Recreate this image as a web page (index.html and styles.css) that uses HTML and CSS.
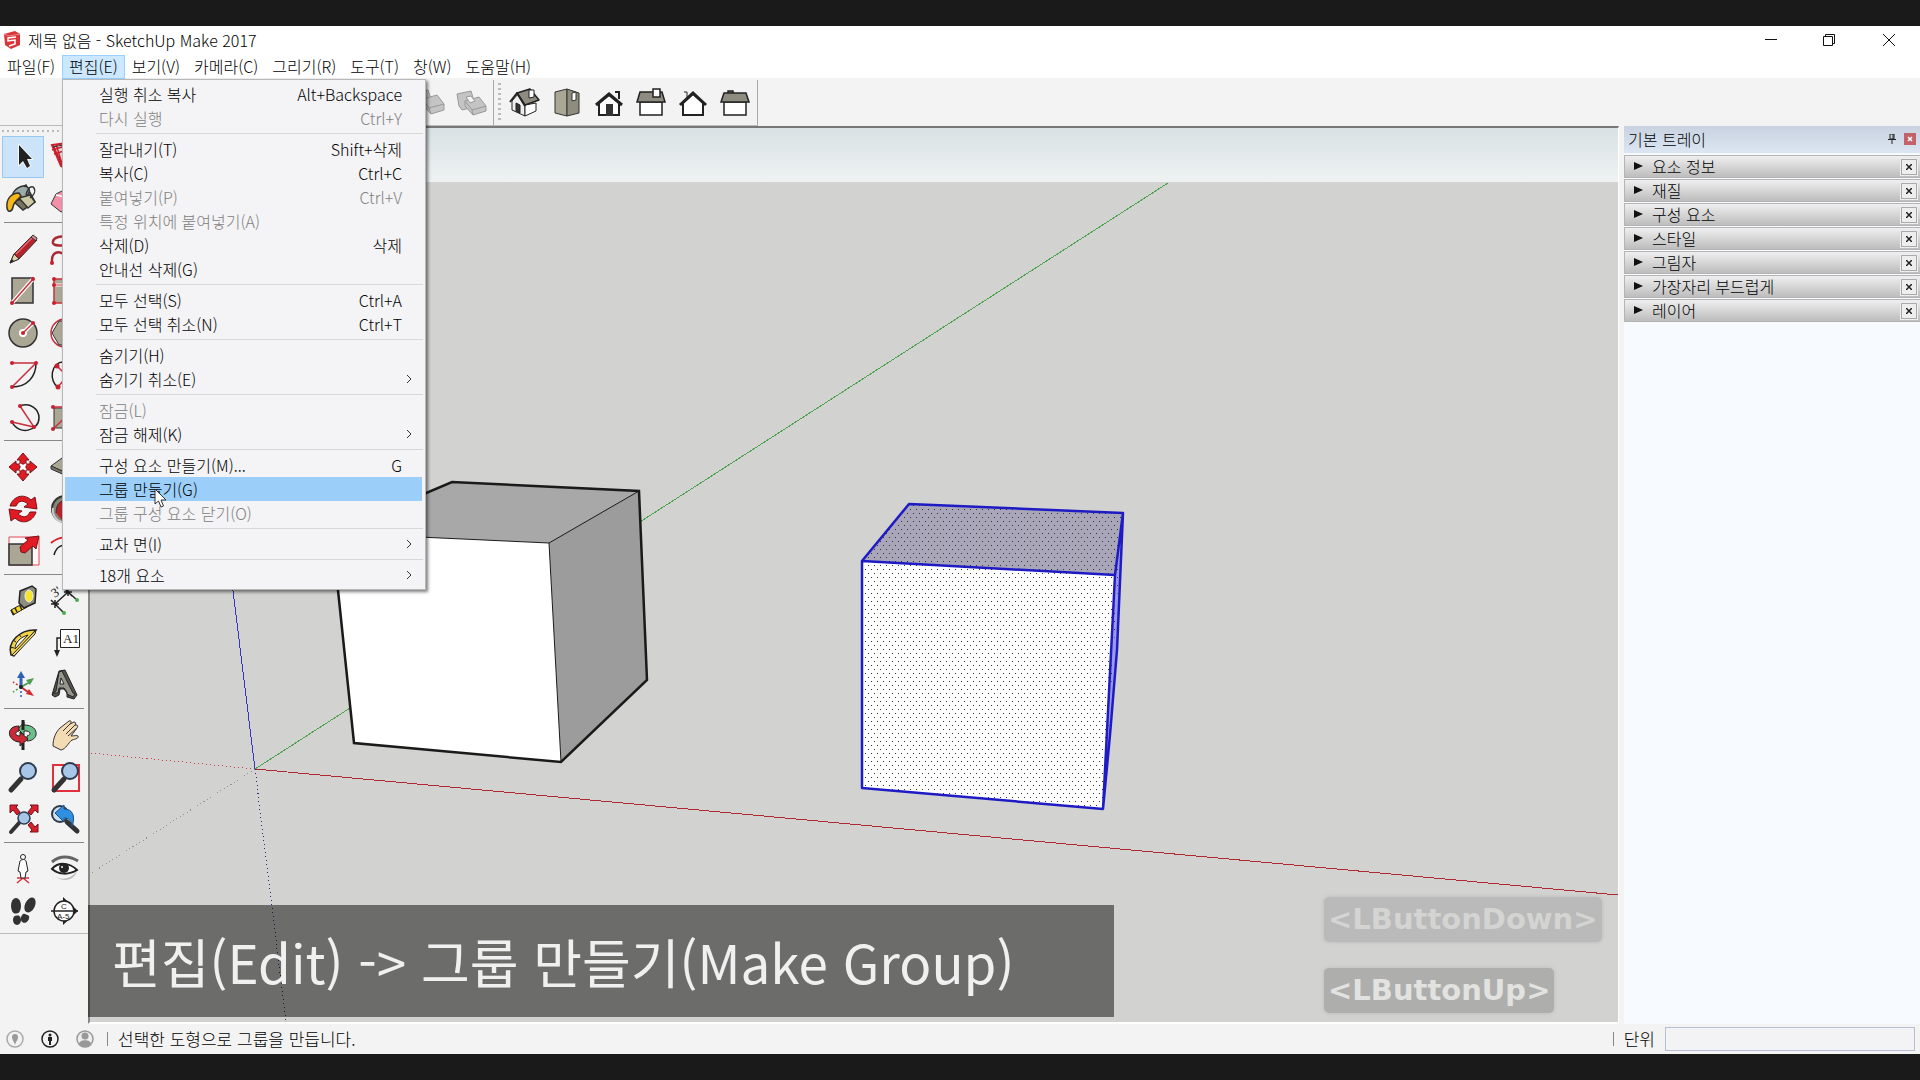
FILE: index.html
```html
<!DOCTYPE html>
<html lang="ko">
<head>
  <meta charset="UTF-8">
  <title>제목 없음 - SketchUp Make 2017</title>
  <meta name="viewport" content="width=device-width, initial-scale=1">
  <link rel="stylesheet" href="styles.css">
</head>
<body>
  <div class="window">
    <header class="titlebar">
      <svg class="logo" viewBox="0 0 18 20">
        <path d="M1 4L12 1l5 3v11l-9 4-6-4z" fill="#d8343a"/>
        <path d="M1 4l5 2 11-2" fill="none" stroke="#f08a8c"/>
        <path d="M13 7L5 8v3l7-1v4l-6 2" fill="none" stroke="#fff" stroke-width="1.500"/>
      </svg>
      <h1>제목 없음 - SketchUp Make 2017</h1>
      <div class="window-buttons">
        <button aria-label="최소화"><svg viewBox="0 0 14 14"><path d="M1 6.500h12"/></svg></button>
        <button aria-label="이전 크기로"><svg viewBox="0 0 14 14"><path d="M1.500 3.500h9v9h-9zM3.500 3V1.500h9v9H11"/></svg></button>
        <button aria-label="닫기"><svg viewBox="0 0 14 14"><path d="M1 1l12 12M13 1L1 13"/></svg></button>
      </div>
    </header>

    <nav class="menubar">
      <button>파일(F)</button>
      <div class="menu-open">
        <button class="active">편집(E)</button>
        <div class="dropdown">
          <button>실행 취소 복사<kbd>Alt+Backspace</kbd></button>
          <button disabled>다시 실행<kbd>Ctrl+Y</kbd></button>
          <hr>
          <button>잘라내기(T)<kbd>Shift+삭제</kbd></button>
          <button>복사(C)<kbd>Ctrl+C</kbd></button>
          <button disabled>붙여넣기(P)<kbd>Ctrl+V</kbd></button>
          <button disabled>특정 위치에 붙여넣기(A)</button>
          <button>삭제(D)<kbd>삭제</kbd></button>
          <button>안내선 삭제(G)</button>
          <hr>
          <button>모두 선택(S)<kbd>Ctrl+A</kbd></button>
          <button>모두 선택 취소(N)<kbd>Ctrl+T</kbd></button>
          <hr>
          <button>숨기기(H)</button>
          <button class="sub">숨기기 취소(E)<svg viewBox="0 0 6 10"><path d="M1 1l4 4-4 4"/></svg></button>
          <hr>
          <button disabled>잠금(L)</button>
          <button class="sub">잠금 해제(K)<svg viewBox="0 0 6 10"><path d="M1 1l4 4-4 4"/></svg></button>
          <hr>
          <button>구성 요소 만들기(M)...<kbd>G</kbd></button>
          <button class="hover">그룹 만들기(G)</button>
          <button disabled>그룹 구성 요소 닫기(O)</button>
          <hr>
          <button class="sub">교차 면(I)<svg viewBox="0 0 6 10"><path d="M1 1l4 4-4 4"/></svg></button>
          <hr>
          <button class="sub">18개 요소<svg viewBox="0 0 6 10"><path d="M1 1l4 4-4 4"/></svg></button>
          <svg class="pointer" viewBox="0 0 13 20"><path d="M1 1v15l3.500-3 2.500 6 2.500-1-2.500-6h5z" fill="#fff" stroke="#333"/></svg>
        </div>
      </div>
      <button>보기(V)</button>
      <button>카메라(C)</button>
      <button>그리기(R)</button>
      <button>도구(T)</button>
      <button>창(W)</button>
      <button>도움말(H)</button>
    </nav>

    <div class="toolbar">
      <div class="group solids">
        <button disabled aria-label="분할"><svg viewBox="0 0 42 42"><g fill="#c4c4c4" stroke="#999"><path d="M7 11l12-3 3 9-12 3z"/><path d="M14 17l14-4 7 9v6l-13 4-7-8z"/><path d="M14 18l6 8 15-4M20 26l2 6" fill="none"/></g></svg></button>
        <button disabled aria-label="쉘"><svg viewBox="0 0 42 42"><g fill="#c4c4c4" stroke="#999" stroke-linejoin="round"><path d="M6 12l14-3 3 10v6l-12 3-3-4z"/><path d="M14 19l14-4 7 9v5l-13 4-8-9z"/><path d="M14 19l7 9 14-4M21 28l1 5" fill="none"/><path d="M15 15l5-1 4 5-5 2z" fill="#f3f3f3"/></g></svg></button>
      </div>
      <div class="group views">
        <span class="grip"></span>
        <button aria-label="등각"><svg viewBox="0 0 42 42"><g stroke="#222" stroke-linejoin="round"><path d="M8 19l6-7 7 11v11l-13-6z" fill="#eee"/><path d="M21 23l11-2v8l-11 5z" fill="#fff"/><path d="M13 11l13-4 9 11-14 5z" fill="#8e8c80" stroke-width="1.500"/><path d="M6 20l7-9 8 13" fill="none" stroke-width="2"/><path d="M12 21l4 2v8l-4-2z" fill="#333"/><path d="M25 8h5v7l-5 1z" fill="#fff"/></g></svg></button>
        <button aria-label="맨 위"><svg viewBox="0 0 42 42"><g stroke="#333" stroke-linejoin="round"><path d="M9 10l12-3v27l-12-3z" fill="#aaa794"/><path d="M21 7l12 4v20l-12 3z" fill="#8f8d7e"/><path d="M26 11l4-1v8l-4 1z" fill="#fff"/></g></svg></button>
        <button aria-label="앞"><svg viewBox="0 0 42 42"><path d="M11 21v12h20V21l-10-8z" fill="#fff" stroke="#222" stroke-width="2"/><path d="M8 23l13-11 13 11" fill="none" stroke="#222" stroke-width="3"/><path d="M18 22h7v12h-7z" fill="#333"/><path d="M27 10h4v7" fill="none" stroke="#222" stroke-width="2"/></svg></button>
        <button aria-label="오른쪽"><svg viewBox="0 0 42 42"><g stroke="#222" stroke-width="1.500"><path d="M10 20h22v13H10z" fill="#fff"/><path d="M10 10h22l3 10H7z" fill="#8e8c80"/><path d="M23 7h7v8h-7z" fill="#fff"/></g></svg></button>
        <button aria-label="뒤"><svg viewBox="0 0 42 42"><path d="M12 10h3v7" fill="none" stroke="#222"/><path d="M11 21v12h20V21l-10-9z" fill="#fff" stroke="#222" stroke-width="2"/><path d="M8 23l13-12 13 12" fill="none" stroke="#222" stroke-width="3"/></svg></button>
        <button aria-label="왼쪽"><svg viewBox="0 0 42 42"><g stroke="#222" stroke-width="1.500"><path d="M14 9h5v3h-5z" fill="#888"/><path d="M10 20h22v13H10z" fill="#fff"/><path d="M10 11h22l3 9H7z" fill="#8e8c80"/></g></svg></button>
      </div>
    </div>

    <main class="workspace">
      <aside class="tools">
        <span class="grip-row"></span>
        <div class="tool-grid">
          <button class="selected" aria-label="선택"><svg viewBox="0 0 42 42"><path d="M17 9v20l4-4 4 7 3-2-3-7h5z" fill="#222" stroke="#fff" stroke-width="1.500" paint-order="stroke"/></svg></button>
          <button aria-label="구성 요소 만들기"><svg viewBox="0 0 42 42"><path d="M8 9l23-3-6 28-8-4z" fill="#e9d5d5" stroke="#c8202f" stroke-width="2"/><path d="M9 9l9 20M12 8l6 20M8 14l20-6M10 18l20-6" stroke="#c8202f" stroke-width="1.500"/><path d="M9 11l10-2" stroke="#333"/></svg></button>
          <button aria-label="페인트통"><svg viewBox="0 0 42 42"><g stroke="#333" stroke-width="1.500"><path d="M13 13l11-6 9 17-12 8-10-9z" fill="#77735f"/><ellipse cx="19" cy="15" rx="9" ry="6" transform="rotate(-30 19 15)" fill="#9cacaa"/><path d="M17 20l9 10 7-6-5-7z" fill="#cfc8a4"/><path d="M24 17c2-8 6-10 8-7s0 7-4 10" fill="none"/><path d="M17 15c-8 0-13 6-12 15 1 5 5 4 6-1 1-6 5-7 8-11z" fill="#f7b719"/></g></svg></button>
          <button aria-label="지우개"><svg viewBox="0 0 42 42"><path d="M7 26l5-10 10-5 12 3v13L17 34z" fill="#f48fa8" stroke="#333"/><path d="M12 17l17 4" stroke="#fff" stroke-width="1.500"/></svg></button>
        </div>
        <hr>
        <div class="tool-grid">
          <button aria-label="선"><svg viewBox="0 0 42 42"><path d="M8 35l4-9L30 8l5 4-18 19z" fill="#b5232d" stroke="#333"/><path d="M14 26L31 9" stroke="#e96a70" stroke-width="1.500"/><path d="M8 35l4-9 5 5z" fill="#e5d4a8" stroke="#333"/><path d="M8 35l2-4 2 2z" fill="#222"/><path d="M29 9l2-2 4 3-1 3z" fill="#dc8b90" stroke="#333"/></svg></button>
          <button aria-label="프리핸드"><svg viewBox="0 0 42 42"><path d="M28 9c-10-2-20 0-19 6 1 5 19 0 22 6M8 35c-1-12 7-13 14-7s12 3 12-3" fill="none" stroke="#a82a35" stroke-width="2.500"/><circle cx="8" cy="35" r="2" fill="#c8202f"/></svg></button>
          <button aria-label="직사각형"><svg viewBox="0 0 42 42"><path d="M10 8h21v25H10z" fill="#aaa794" stroke="#333" stroke-width="1.500"/><path d="M10 33L31 9" stroke="#fff" stroke-width="4"/><path d="M10 33L31 9" stroke="#c8303f" stroke-width="1.500"/><g fill="#c8202f"><circle cx="10" cy="33" r="2"/><circle cx="31" cy="9" r="2"/></g></svg></button>
          <button aria-label="회전된 직사각형"><svg viewBox="0 0 42 42"><path d="M10 9h22v24H10z" fill="#aaa794" stroke="#c8303f" stroke-width="1.500"/><path d="M10 15h22" stroke="#fff" stroke-width="3"/><path d="M10 15h22" stroke="#c8303f"/><g fill="#c8202f"><circle cx="10" cy="9" r="2"/><circle cx="10" cy="15" r="2"/><circle cx="10" cy="33" r="2"/></g></svg></button>
          <button aria-label="원"><svg viewBox="0 0 42 42"><circle cx="21" cy="21" r="14" fill="#aaa794" stroke="#333" stroke-width="1.500"/><path d="M21 21l10-10" stroke="#fff" stroke-width="4"/><circle cx="21" cy="21" r="4" fill="#fff"/><path d="M21 21l10-10" stroke="#c8303f" stroke-width="1.500"/><g fill="#c8202f"><circle cx="21" cy="21" r="2"/><circle cx="31" cy="11" r="2"/></g></svg></button>
          <button aria-label="다각형"><svg viewBox="0 0 42 42"><circle cx="21" cy="21" r="14" fill="#fff" stroke="#c8303f" stroke-width="1.500"/><path d="M8 21l7-12h13l6 12-6 12H15z" fill="#aaa794" stroke="#333"/></svg></button>
          <button aria-label="호"><svg viewBox="0 0 42 42"><path d="M34 9c0 14-9 24-24 24" fill="none" stroke="#222" stroke-width="1.500"/><path d="M10 9h24L10 33" fill="none" stroke="#c8303f" stroke-width="1.500"/><g fill="#c8202f"><circle cx="10" cy="9" r="2"/><circle cx="34" cy="9" r="2"/><circle cx="10" cy="33" r="2"/></g></svg></button>
          <button aria-label="2점 호"><svg viewBox="0 0 42 42"><path d="M20 8C6 8 5 28 14 33" fill="none" stroke="#222" stroke-width="1.500"/><path d="M13 12l10 10-9 11" fill="none" stroke="#c8303f" stroke-width="1.500"/><g fill="#c8202f"><circle cx="13" cy="12" r="2.500"/><circle cx="14" cy="33" r="2.500"/></g></svg></button>
          <button aria-label="파이"><svg viewBox="0 0 42 42"><path d="M18 10c10-4 19 3 19 12 0 13-20 18-27 4" fill="none" stroke="#222" stroke-width="1.500"/><path d="M18 10l14 21-22-5" fill="none" stroke="#c8303f" stroke-width="1.500"/><g fill="#c8202f"><circle cx="18" cy="10" r="2"/><circle cx="32" cy="31" r="2"/><circle cx="10" cy="26" r="2"/></g></svg></button>
          <button aria-label="3점 호"><svg viewBox="0 0 42 42"><path d="M10 12h20v20H10z" fill="#aaa794" stroke="#333"/><path d="M9 33l21-20M9 11h20" stroke="#c8303f" stroke-width="1.500"/><g fill="#c8202f"><circle cx="9" cy="11" r="2"/><circle cx="9" cy="33" r="2"/></g></svg></button>
        </div>
        <hr>
        <div class="tool-grid">
          <button aria-label="이동"><svg viewBox="0 0 42 42"><g fill="#e01b24" stroke="#7c1218"><path d="M21 7l6 7h-3v4h-6v-4h-3zM21 35l6-7h-3v-4h-6v4h-3zM7 21l7-6v3h4v6h-4v3zM35 21l-7-6v3h-4v6h4v3z"/></g><path d="M18 18l6 6M24 18l-6 6" stroke="#fff" stroke-width="2"/></svg></button>
          <button aria-label="밀기/끌기"><svg viewBox="0 0 42 42"><path d="M7 20l11-8 16 4-9 12z" fill="#aaa794" stroke="#333"/><path d="M7 20v3l18 8v-3zM25 28v3l9-11v-4z" fill="#77746a" stroke="#333"/><path d="M20 17V8" stroke="#e01b24" stroke-width="4"/></svg></button>
          <button aria-label="회전"><svg viewBox="0 0 42 42"><g fill="#e01b24" stroke="#7c1218"><path d="M8 18C11 8 22 5 29 12l4-3 2 12-13-2 4-3c-5-4-9-4-12 2z"/><path d="M34 24c-3 10-14 13-21 6l-4 3-2-12 13 2-4 3c5 4 9 4 12-2z"/></g></svg></button>
          <button aria-label="따라가기"><svg viewBox="0 0 42 42"><circle cx="21" cy="21" r="13" fill="#888579" stroke="#333" stroke-width="2"/><path d="M12 25c0-11 7-15 17-12l-2 12-9 7" fill="#b5232d" stroke="#333"/><path d="M9 20c-1 6 2 12 9 14" stroke="#ccc" stroke-width="2" fill="none"/></svg></button>
          <button aria-label="배율"><svg viewBox="0 0 42 42"><path d="M7 7h30v28H7z" fill="#fff8f8" stroke="#e04854"/><path d="M7 14h23v21H7z" fill="#aaa794" stroke="#333" stroke-width="1.500"/><path d="M37 6l-3 13-3-3-8 7-4-1-1-5 8-7-3-2z" fill="#e01b24" stroke="#7c1218"/></svg></button>
          <button aria-label="간격 띄우기"><svg viewBox="0 0 42 42"><path d="M7 13C14 7 24 5 34 10" fill="none" stroke="#e01b24" stroke-width="2"/><path d="M10 25c2-8 8-12 18-9" fill="none" stroke="#222" stroke-width="1.500"/></svg></button>
        </div>
        <hr>
        <div class="tool-grid">
          <button aria-label="줄자"><svg viewBox="0 0 42 42"><path d="M9 30l13-7 3 4-14 8z" fill="#f5d51d" stroke="#222"/><path d="M13 28l2 4M18 26l2 4M9 30l3 5" stroke="#222" stroke-width="1.500"/><path d="M18 11l12-5 4 3-1 14-11 5-5-5z" fill="#8d8c80" stroke="#222" stroke-width="1.500"/><ellipse cx="27" cy="16" rx="4" ry="6" fill="#f5e62b" stroke="#eee"/></svg></button>
          <button aria-label="치수"><svg viewBox="0 0 42 42"><path d="M11 24L24 12M11 24l9 9M24 12l9 8M7 20l8 8M20 8l8 8M11 20v8M7 24h8M24 8v8M20 12h8" stroke="#222" stroke-width="1.500"/><g fill="#46b04a"><circle cx="20" cy="33" r="2"/><circle cx="33" cy="20" r="2"/></g><text x="8" y="17" transform="rotate(-35 11 13)" class="icon-text">3'</text></svg></button>
          <button aria-label="각도기"><svg viewBox="0 0 42 42"><path d="M9 33C5 20 18 7 34 8L12 34z" fill="#f2d24a" stroke="#222" stroke-width="1.500"/><path d="M13 27c0-7 6-12 13-14z" fill="#f3f3f3" stroke="#222"/><path d="M10 33L34 8l-1 4-21 22z" fill="#f7e07a" stroke="#222"/><path d="M8 25l4 1M11 18l3 2M17 12l2 3" stroke="#222"/></svg></button>
          <button aria-label="텍스트"><svg viewBox="0 0 42 42"><path d="M16.500 7.500h19v18h-19z" fill="#fff" stroke="#222"/><path d="M16 16h-3v14" fill="none" stroke="#222" stroke-width="1.500"/><path d="M10 28h6l-3 7z" fill="#222"/><text x="19" y="21" class="icon-text">A1</text></svg></button>
          <button aria-label="축"><svg viewBox="0 0 42 42"><path d="M19 23V12" stroke="#2e62b5" stroke-width="3"/><path d="M15 14l4-7 4 7z" fill="#2e62b5"/><path d="M19 23l9-5" stroke="#4d9d50" stroke-width="2"/><path d="M24 16l8-2-4 7z" fill="#4d9d50"/><path d="M19 23l7 5" stroke="#d02b32" stroke-width="2"/><path d="M27 25l5 7-8-2z" fill="#d02b32"/><path d="M19 23v10" stroke="#2e62b5" stroke-dasharray="2 2" stroke-width="1.500"/><path d="M19 23l-8 5" stroke="#4d9d50" stroke-dasharray="2 2" stroke-width="1.500"/><path d="M19 23l-8-5" stroke="#d02b32" stroke-dasharray="2 2" stroke-width="1.500"/><circle cx="19" cy="23" r="2" fill="#222"/></svg></button>
          <button aria-label="3D 텍스트"><svg viewBox="0 0 42 42"><path d="M8 31l7-24 6-1 12 25-3 4-7-2v-4l-3-4h-4l-1 6-4 2z" fill="#55544f" stroke="#222"/><path d="M9 29l3-2 3-19 3-1 11 22 2 1-2 3-6-3v-2l-3-4h-5l-1 5z" fill="#96958b" stroke="#222"/><path d="M16 20l1-6 3 6z" fill="#f3f3f3" stroke="#222"/></svg></button>
        </div>
        <hr>
        <div class="tool-grid">
          <button aria-label="궤도"><svg viewBox="0 0 42 42"><path d="M22 11c8 0 13 4 12 10-1 4-5 6-9 6v-5c4-1 4-4 0-5h-3v4l-6-6 6-7z" fill="#6cbf8a" stroke="#222"/><path d="M17 12C9 12 6 17 8 22c2 4 6 6 10 6v4l8-7-8-7v4c-5 0-6-4-1-5z" fill="#c92a35" stroke="#222"/><path d="M21 6v10M21 29v7" stroke="#222" stroke-width="3"/></svg></button>
          <button aria-label="이동 화면"><svg viewBox="0 0 42 42"><path d="M9 32c0-8 3-14 7-18l9-7c2-1 3 1 1 3l4-2c2 0 2 2 1 3h2c1 1 1 2 0 3l-6 8c3 0 6-1 7 0 1 2-2 3-6 4-4 3-6 9-11 10z" fill="#f3dbb3" stroke="#333"/><path d="M26 10l-7 7M31 11l-9 9M33 14l-9 8" stroke="#333" fill="none"/></svg></button>
          <button aria-label="확대/축소"><svg viewBox="0 0 42 42"><path d="M19 23L9 34" stroke="#333" stroke-width="5" stroke-linecap="round"/><circle cx="26" cy="15" r="8" fill="#a7c6e8" stroke="#2d3b4c" stroke-width="2"/></svg></button>
          <button aria-label="창 확대"><svg viewBox="0 0 42 42"><path d="M9 9h26v26H9z" fill="none" stroke="#e0303c" stroke-width="2"/><path d="M20 23L10 34" stroke="#333" stroke-width="5" stroke-linecap="round"/><circle cx="26" cy="15" r="8" fill="#a7c6e8" stroke="#2d3b4c" stroke-width="2"/></svg></button>
          <button aria-label="범위 확대"><svg viewBox="0 0 42 42"><g fill="#d3222d" stroke="#7c1218"><path d="M8 7h8l-2 2 4 5-3 3-4-5-3 3zM36 7h-8l2 2-4 5 3 3 4-5 3 3zM36 34h-8l2-2-4-5 3-3 4 5 3-3z"/></g><path d="M17 25l-8 9" stroke="#333" stroke-width="4" stroke-linecap="round"/><circle cx="22" cy="20" r="6" fill="#a7c6e8" stroke="#2d3b4c" stroke-width="1.500"/></svg></button>
          <button aria-label="이전"><svg viewBox="0 0 42 42"><circle cx="16" cy="16" r="8" fill="#cfe0f2" stroke="#2d3b4c" stroke-width="2"/><path d="M23 24l10 9" stroke="#333" stroke-width="5" stroke-linecap="round"/><path d="M11 15l9-8v4c8 0 12 6 8 18 0-6-3-9-8-9v4z" fill="#2f8fe0" stroke="#1c4c80"/></svg></button>
        </div>
        <hr>
        <div class="tool-grid">
          <button aria-label="카메라 위치"><svg viewBox="0 0 42 42"><path d="M15 35l6-5 6 5M15 30h12" fill="none" stroke="#e0303c" stroke-width="1.500"/><circle cx="21" cy="9" r="2.500" fill="#fff" stroke="#222"/><path d="M18 13c2-2 5-2 6 0l2 10-2 1-1 6h-4l-1-6-2-1z" fill="#fff" stroke="#222"/></svg></button>
          <button aria-label="둘러보기"><svg viewBox="0 0 42 42"><path d="M10 28c8 5 17 3 23-5-2 8-12 13-23 5z" fill="#bbb"/><path d="M8 21c6-7 17-7 25 1-8 5-18 5-25-1z" fill="#fff" stroke="#222" stroke-width="2"/><circle cx="20" cy="20" r="5" fill="#222"/><circle cx="18" cy="19" r="1" fill="#fff"/><path d="M8 14c8-7 18-6 26-1" fill="none" stroke="#666" stroke-width="3"/></svg></button>
          <button aria-label="걷기"><svg viewBox="0 0 42 42"><g fill="#333"><ellipse cx="14" cy="16" rx="5" ry="8"/><ellipse cx="15" cy="30" rx="4" ry="5"/><ellipse cx="28" cy="15" rx="5" ry="8" transform="rotate(25 28 15)"/><ellipse cx="23" cy="28" rx="4" ry="5" transform="rotate(25 23 28)"/></g><path d="M10 25l9-1M19 21l9 4" stroke="#f3f3f3" stroke-width="2"/></svg></button>
          <button aria-label="단면"><svg viewBox="0 0 42 42"><path d="M19 7l15 14-15 14z" fill="#222"/><circle cx="20" cy="21" r="10" fill="#fff" stroke="#222" stroke-width="1.500"/><path d="M7 21h27" stroke="#222" stroke-width="1.500"/><text x="17" y="19" class="icon-tiny">C</text><text x="13" y="29" class="icon-tiny">A-5</text></svg></button>
        </div>
      </aside>

      <section class="viewport">
        <svg class="scene" viewBox="90 128 1528 894" preserveAspectRatio="none">
          <defs>
            <linearGradient id="sky" x1="0" y1="0" x2="0" y2="1">
              <stop offset="0" stop-color="#d9e1e4"/>
              <stop offset="1" stop-color="#eef2f2"/>
            </linearGradient>
            <pattern id="dots" width="6" height="8" patternUnits="userSpaceOnUse">
              <path d="M1 1h1v1H1zM4 5h1v1H4z" fill="#333" shape-rendering="crispEdges"/>
            </pattern>
          </defs>
          <path d="M90 182h1528v840H90z" fill="#d2d2d0"/>
          <path d="M90 128h1528v54H90z" fill="url(#sky)"/>
          <g fill="none" shape-rendering="crispEdges">
            <path d="M255 769L1168 183" stroke="#4da34d"/>
            <path d="M255 769L90 874" stroke="#8a9a8a" stroke-dasharray="1 3"/>
            <path d="M255 769L1618 895" stroke="#b02830"/>
            <path d="M255 769L90 753" stroke="#d04048" stroke-dasharray="1 3"/>
            <path d="M255 769L191 250" stroke="#3a34c0"/>
            <path d="M255 769L286 1022" stroke="#2a2a80" stroke-dasharray="1 3"/>
          </g>
          <!-- plain cube -->
          <path d="M332 533L452 482 639 491 549 543z" fill="#a8a8a8"/>
          <path d="M549 543L639 491 647 680 561 762z" fill="#9c9c9c"/>
          <path d="M332 533L549 543 561 762 354 743z" fill="#fff"/>
          <path d="M332 533L549 543 561 762M549 543L639 491" fill="none" stroke="#1a1a1a"/>
          <path d="M332 533L452 482 639 491 647 680 561 762 354 743z" fill="none" stroke="#1a1a1a" stroke-width="2.500"/>
          <!-- selected cube -->
          <path d="M862 561L909 504 1123 513 1115 575z" fill="#a8a6b8"/>
          <path d="M862 561L1115 575 1103 809 862 788z" fill="#fff"/>
          <path d="M1115 575L1123 513 1117 650 1110 735 1103 809z" fill="#9a9ae8"/>
          <path d="M862 561L909 504 1123 513 1103 809 862 788z" fill="url(#dots)"/>
          <path d="M862 561L909 504 1123 513 1117 650 1110 735 1103 809 862 788zL1115 575 1103 809M1115 575L1123 513" fill="none" stroke="#1f1bc4" stroke-width="2.500" stroke-linejoin="round"/>
        </svg>
        <div class="keys">
          <span class="fading">&lt;LButtonDown&gt;</span>
          <span>&lt;LButtonUp&gt;</span>
        </div>
        <p class="caption">편집(Edit) -&gt; 그룹 만들기(Make Group)</p>
      </section>

      <aside class="tray">
        <div class="tray-title">
          <h2>기본 트레이</h2>
          <button class="pin" aria-label="고정"><svg viewBox="0 0 8 10"><path d="M2 0h4v5H2zM0 5.500h8M4 6v4M5 0v5" fill="none" stroke="#222"/></svg></button>
          <button class="tray-close" aria-label="트레이 닫기"><svg viewBox="0 0 6 6"><path d="M1 1l4 4M5 1L1 5"/></svg></button>
        </div>
        <div class="panel"><button class="panel-name">요소 정보</button><button class="panel-close" aria-label="닫기"><svg viewBox="0 0 6 6"><path d="M0 0l6 6M6 0L0 6"/></svg></button></div>
        <div class="panel"><button class="panel-name">재질</button><button class="panel-close" aria-label="닫기"><svg viewBox="0 0 6 6"><path d="M0 0l6 6M6 0L0 6"/></svg></button></div>
        <div class="panel"><button class="panel-name">구성 요소</button><button class="panel-close" aria-label="닫기"><svg viewBox="0 0 6 6"><path d="M0 0l6 6M6 0L0 6"/></svg></button></div>
        <div class="panel"><button class="panel-name">스타일</button><button class="panel-close" aria-label="닫기"><svg viewBox="0 0 6 6"><path d="M0 0l6 6M6 0L0 6"/></svg></button></div>
        <div class="panel"><button class="panel-name">그림자</button><button class="panel-close" aria-label="닫기"><svg viewBox="0 0 6 6"><path d="M0 0l6 6M6 0L0 6"/></svg></button></div>
        <div class="panel"><button class="panel-name">가장자리 부드럽게</button><button class="panel-close" aria-label="닫기"><svg viewBox="0 0 6 6"><path d="M0 0l6 6M6 0L0 6"/></svg></button></div>
        <div class="panel"><button class="panel-name">레이어</button><button class="panel-close" aria-label="닫기"><svg viewBox="0 0 6 6"><path d="M0 0l6 6M6 0L0 6"/></svg></button></div>
      </aside>
    </main>

    <footer class="statusbar">
      <div class="status-icons">
        <svg viewBox="0 0 20 20"><circle cx="10" cy="10" r="8" fill="none" stroke="#aaa" stroke-width="1.500"/><path d="M10 16c-1-4-3-5-3-8a3 3 0 0 1 6 0c0 3-2 4-3 8z" fill="#999"/></svg>
        <svg viewBox="0 0 20 20"><circle cx="10" cy="10" r="8" fill="none" stroke="#222" stroke-width="1.500"/><circle cx="10" cy="6" r="1.500" fill="#222"/><path d="M8 8h4v4h-1v4H9v-4H8z" fill="#222"/></svg>
        <svg viewBox="0 0 20 20"><circle cx="10" cy="10" r="8" fill="#eee" stroke="#999" stroke-width="1.500"/><circle cx="10" cy="7" r="3.500" fill="#999"/><path d="M4 15c0-5 12-5 12 0-3 4-9 4-12 0z" fill="#999"/></svg>
      </div>
      <p>선택한 도형으로 그룹을 만듭니다.</p>
      <label for="measure">단위</label>
      <input id="measure" type="text">
    </footer>
  </div>
</body>
</html>
```
FILE: styles.css
```css
* {
  box-sizing: border-box;
}
html, body {
  margin: 0;
  height: 100%;
}
body {
  background: #1a1a1a;
  padding: 26px 0;
  font-family: 'Noto Sans CJK KR', sans-serif;
  font-size: 16px;
  font-weight: 300;
  line-height: 22px;
  color: #000;
  overflow: hidden;
}
button {
  font: inherit;
  color: inherit;
  background: none;
  border: none;
  padding: 0;
  margin: 0;
}
h1, h2, p {
  margin: 0;
  font-size: 16px;
  font-weight: 300;
}
.window {
  height: 100%;
  display: flex;
  flex-direction: column;
  background: #f3f3f3;
}

/* title bar */
.titlebar {
  display: flex;
  align-items: center;
  height: 29px;
  padding: 0 0 2px 3px;
  background: #fff;
}
.logo {
  width: 18px;
  height: 20px;
  margin-right: 7px;
}
.window-buttons {
  margin-left: auto;
  display: flex;
}
.window-buttons button {
  width: 58px;
  height: 27px;
}
.window-buttons button:last-child {
  width: 62px;
}
.window-buttons svg {
  width: 14px;
  height: 14px;
  fill: none;
  stroke: #111;
}

/* menu bar */
.menubar {
  display: flex;
  background: #fff;
  height: 23px;
}
.menubar > button, .menu-open > button {
  height: 24px;
  line-height: 21px;
  padding: 0 6px 1px;
  border: 1px solid transparent;
  white-space: nowrap;
}
.menu-open {
  position: relative;
}
.menu-open > .active {
  background: #cce8ff;
  border-color: #99d1ff;
}
.dropdown {
  position: absolute;
  top: 24px;
  left: 0;
  z-index: 10;
  width: 364px;
  padding: 2px;
  background: #f4f3f5;
  border: 1px solid #b8b8b8;
  box-shadow: 2px 2px 3px rgba(0, 0, 0, 0.5);
}
.dropdown button {
  display: flex;
  justify-content: space-between;
  align-items: center;
  width: 357px;
  height: 24px;
  padding: 0 20px 1px 34px;
  white-space: nowrap;
}
.dropdown button:disabled {
  color: #808080;
}
.dropdown .sub {
  padding-right: 10px;
}
.dropdown .sub svg {
  width: 6px;
  height: 10px;
  fill: none;
  stroke: #333;
}
.dropdown .hover {
  background: #9bcffa;
}
.dropdown kbd {
  font: inherit;
}
.dropdown hr {
  border: none;
  height: 1px;
  margin: 3px 0 3px 31px;
  background: #d8d8d8;
}
.pointer {
  position: absolute;
  left: 91px;
  top: 408px;
  width: 13px;
  height: 20px;
}

/* top toolbar */
.toolbar {
  display: flex;
  height: 48px;
  padding-top: 2px;
}
.group {
  display: flex;
  align-items: center;
  border-right: 1px solid #aaa;
  border-bottom: 1px solid #bbb;
}
.group button, .tool-grid button {
  width: 42px;
  height: 42px;
}
.group svg, .tool-grid svg {
  display: block;
  width: 42px;
  height: 42px;
  fill: none;
}
.solids {
  width: 494px;
  justify-content: flex-end;
}
.grip {
  width: 3px;
  height: 40px;
  margin: 0 3px 0 4px;
  background: repeating-linear-gradient(#bbb 0 2px, transparent 2px 5px);
}
.views {
  padding-right: 1px;
}

/* main area */
.workspace {
  flex: 1;
  min-height: 0;
  display: flex;
}
.tools {
  width: 88px;
  height: 808px;
  border-bottom: 1px solid #bbb;
}
.grip-row {
  display: block;
  height: 2px;
  margin: 4px 2px;
  background: repeating-linear-gradient(90deg, #bbb 0 2px, transparent 2px 5px);
}
.tool-grid {
  display: grid;
  grid-template-columns: 42px 42px;
  padding-left: 2px;
}
.tool-grid .selected {
  background: #cce4fa;
  outline: 1px solid #99c9f0;
  outline-offset: -1px;
}
.tools hr {
  border: none;
  height: 1px;
  margin: 2px 4px 5px;
  background: #888;
}
.icon-text {
  font-family: 'Liberation Serif', serif;
  font-size: 13px;
  fill: #222;
}
.icon-tiny {
  font-family: 'Liberation Sans', sans-serif;
  font-size: 8px;
  fill: #222;
}
.viewport {
  position: relative;
  flex: 1;
  min-width: 0;
  border-top: 2px solid #777;
  border-left: 2px solid #888;
  border-right: 1px solid #fff;
  border-bottom: 2px solid #fff;
}
.scene {
  display: block;
  width: 100%;
  height: 100%;
}
.caption {
  position: absolute;
  left: -2px;
  bottom: 5px;
  padding: 0 100px 0 24px;
  font-size: 53px;
  font-weight: 400;
  line-height: 112px;
  white-space: nowrap;
  color: #f0f0f0;
  background: rgba(10, 10, 10, 0.51);
}
.keys {
  position: absolute;
  right: 15px;
  bottom: 9px;
  width: 279px;
  display: flex;
  flex-direction: column;
  align-items: flex-start;
  gap: 26px;
}
.keys span {
  padding: 0 4px;
  border-radius: 5px;
  background: #aeaeac;
  box-shadow: 0 0 4px #bbb;
  color: #e2e2e0;
  font-family: 'DejaVu Sans', sans-serif;
  font-size: 29px;
  font-weight: 700;
  line-height: 45px;
}
.keys .fading {
  background: #bababa;
  color: #d4d4d2;
}

/* tray */
.tray {
  width: 296px;
  margin-left: 5px;
  background: #f7faff;
}
.tray-title {
  display: flex;
  align-items: center;
  height: 27px;
  margin-bottom: 2px;
  padding: 0 4px 2px;
  background: linear-gradient(#c8d2e0, #dce6f3);
}
.tray-title .pin {
  margin-left: auto;
  width: 8px;
  height: 10px;
  margin-right: 8px;
}
.tray-title svg {
  display: block;
  width: 100%;
}
.tray-close {
  width: 12px;
  height: 12px;
  padding: 3px;
  background: #c4626a;
}
.tray-close path {
  stroke: #fff;
  stroke-width: 1.5;
}
.panel {
  display: flex;
  align-items: center;
  height: 23px;
  margin-bottom: 1px;
  padding-right: 3px;
  border: 1px solid #b4b4b4;
  border-right: none;
  background: linear-gradient(#efefef, #bdbdbd);
}
.panel-name {
  flex: 1;
  display: flex;
  align-items: center;
  gap: 9px;
  height: 21px;
  padding: 0 0 1px 9px;
  line-height: 20px;
}
.panel-name::before {
  content: '';
  border-left: 9px solid #111;
  border-top: 4px solid transparent;
  border-bottom: 4px solid transparent;
}
.panel-close {
  width: 16px;
  height: 16px;
  padding: 4px;
  background: #eee;
  border: 1px solid #aaa;
  outline: 1px solid #eee;
}
.panel-close svg {
  display: block;
  width: 6px;
  height: 6px;
  stroke: #222;
  stroke-width: 1.5;
}

/* status bar */
.statusbar {
  display: flex;
  align-items: center;
  height: 30px;
  padding: 0 5px;
}
.status-icons {
  display: flex;
  gap: 15px;
  margin-right: 12px;
}
.status-icons svg {
  width: 20px;
  height: 20px;
}
.statusbar p, .statusbar label {
  padding-left: 10px;
  border-left: 1px solid #888;
  font-size: 17px;
  line-height: 14px;
}
.statusbar label {
  margin-left: auto;
  margin-right: 10px;
}
.statusbar input {
  width: 250px;
  height: 24px;
  border: 1px solid #b8bfd4;
  background: #f3f3f5;
}
```
